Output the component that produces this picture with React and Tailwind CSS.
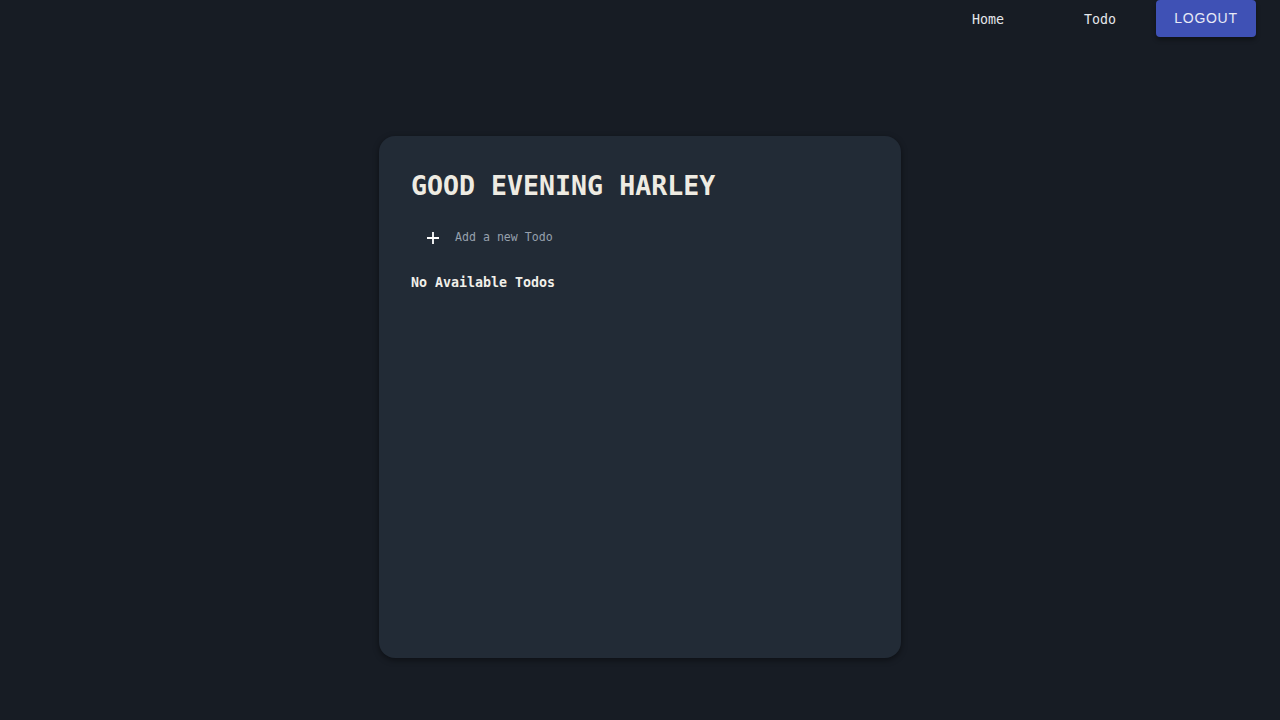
import React from 'react';

const mono = { fontFamily: '"DejaVu Sans Mono", "Liberation Mono", monospace' };

const NavBar = () => (
  <nav className="flex h-[37px] items-center justify-end pr-6">
    <a className="w-[112px] pt-[2px] text-center text-[13.3px] text-gray-200" style={mono}>Home</a>
    <a className="w-[112px] pt-[2px] text-center text-[13.3px] text-gray-200" style={mono}>Todo</a>
    <button className="h-[37px] w-[100px] rounded bg-[#3f51b5] text-[14px] tracking-[0.7px] text-[#e8eaf6] shadow-[0_3px_4px_rgba(0,0,0,0.35)] [font-family:'Liberation_Sans',Arial,sans-serif]">
      LOGOUT
    </button>
  </nav>
);

const TodoCard = () => (
  <div className="mx-auto mt-[99px] h-[522px] w-[522px] rounded-2xl bg-[#222b36] px-8 pt-[30px] shadow-[0_2px_6px_rgba(0,0,0,0.45)]" style={mono}>
    <h1 className="text-[26.6px] leading-[40px] font-semibold text-[#eeebe2]">GOOD EVENING HARLEY</h1>
    <div className="mt-[20px] flex h-6 items-center pl-[15px]">
      <svg width="14" height="14" viewBox="0 0 14 14" className="text-white">
        <path d="M7 1v12M1 7h12" stroke="currentColor" strokeWidth="1.8" />
      </svg>
      <span className="ml-[15px] text-[11.6px] text-[#96a0ad]">Add a new Todo</span>
    </div>
    <p className="mt-[23px] text-[13.3px] font-bold text-[#f1efe9]">No Available Todos</p>
  </div>
);

export default function App() {
  return (
    <div className="min-h-screen bg-[#171c24]">
      <NavBar />
      <TodoCard />
    </div>
  );
}
